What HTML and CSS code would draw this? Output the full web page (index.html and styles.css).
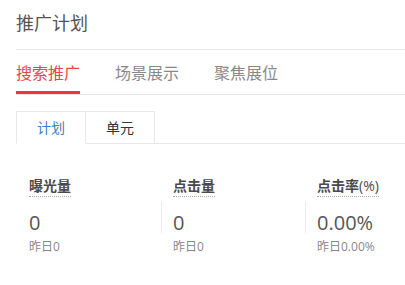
FILE: index.html
```html
<!DOCTYPE html>
<html lang="zh-CN">

<head>
    <meta charset="UTF-8">
    <meta name="viewport" content="width=device-width, initial-scale=1.0">
    <title>推广计划</title>
    <link rel="stylesheet" href="styles.css">
</head>

<body>
    <div class="panel">
        <h1 class="panel-title">推广计划</h1>

        <ul class="main-tabs">
            <li class="main-tab active">搜索推广</li>
            <li class="main-tab">场景展示</li>
            <li class="main-tab">聚焦展位</li>
        </ul>

        <div class="sub-tabs">
            <div class="sub-tab active">计划</div>
            <div class="sub-tab">单元</div>
        </div>

        <div class="stats">
            <div class="stat">
                <span class="stat-label">曝光量</span>
                <div class="stat-value">0</div>
                <div class="stat-prev">昨日0</div>
            </div>
            <div class="stat">
                <span class="stat-label">点击量</span>
                <div class="stat-value">0</div>
                <div class="stat-prev">昨日0</div>
            </div>
            <div class="stat">
                <span class="stat-label">点击率<span class="unit">(%)</span></span>
                <div class="stat-value">0.00%</div>
                <div class="stat-prev">昨日0.00%</div>
            </div>
        </div>
    </div>
</body>

</html>
```

FILE: styles.css
```css
/* Reset */
* {
    margin: 0;
    padding: 0;
    box-sizing: border-box;
}

body {
    background: #fff;
    color: #555;
    font-family: 'Open Sans', 'Noto Sans CJK SC', sans-serif;
    overflow: hidden;
}

/* Panel */
.panel {
    padding-left: 16px;
}

.panel-title {
    font-size: 18px;
    font-weight: 400;
    line-height: 20px;
    color: #555;
    padding: 13px 0 16px;
    border-bottom: 1px solid #ebebeb;
}

/* Main tabs */
.main-tabs {
    list-style: none;
    display: flex;
    border-bottom: 1px solid #e6e6e6;
}

.main-tab {
    font-size: 16px;
    line-height: 22px;
    color: #888;
    padding: 12px 0 7px;
    margin-right: 35px;
    border-bottom: 3px solid transparent;
}

.main-tab.active {
    color: #e2474b;
    border-bottom-color: #e4393c;
}

/* Sub tabs */
.sub-tabs {
    display: flex;
    align-items: flex-start;
    margin-top: 16px;
    border-bottom: 1px solid #e8e8e8;
}

.sub-tab {
    width: 70px;
    height: 32px;
    line-height: 31px;
    font-size: 14px;
    text-align: center;
    color: #333;
    border: 1px solid #e8e8e8;
    border-bottom: 0;
}

.sub-tab + .sub-tab {
    margin-left: -1px;
}

.sub-tab.active {
    height: 33px;
    margin-bottom: -1px;
    color: #3b7ec4;
    border-bottom: 1px solid #fff;
}

/* Stats */
.stats {
    display: flex;
    padding: 30px 0 0 1px;
}

.stat {
    flex: 0 0 144px;
    padding-left: 12px;
}

.stat:last-child {
    flex: 1 1 0;
    min-width: 0;
}

.stat-label {
    display: inline-block;
    font-size: 14px;
    font-weight: 700;
    line-height: 20px;
    color: #4a4a4a;
    border-bottom: 1px dotted #aaa;
}

.stat-label .unit {
    font-weight: 400;
}

.stat-value {
    font-size: 20px;
    line-height: 21px;
    padding-top: 11px;
    height: 32px;
    margin-top: 4px;
    color: #555;
}

.stat + .stat .stat-value {
    margin-left: -12px;
    padding-left: 11px;
    border-left: 1px solid #ececec;
}

.stat-prev {
    font-size: 12px;
    line-height: 18px;
    margin-top: 5px;
    color: #888;
}
```
